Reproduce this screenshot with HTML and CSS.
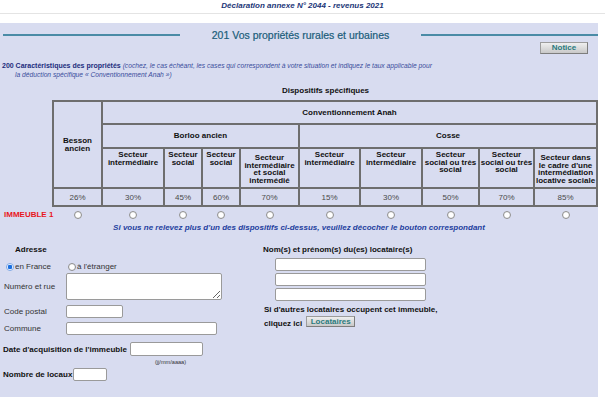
FILE: index.html
```html
<!DOCTYPE html>
<html lang="fr">
<head>
    <meta charset="UTF-8">
    <title>Déclaration annexe N° 2044 - revenus 2021</title>
    <link rel="stylesheet" href="styles.css">
</head>
<body>
    <div class="top">Déclaration annexe N° 2044 - revenus 2021</div>

    <div class="panel">
        <!-- Titre de la rubrique -->
        <div class="section-title">
            <span class="rule"></span>
            <h1>201 Vos propriétés rurales et urbaines</h1>
            <span class="rule"></span>
        </div>

        <div class="notice-row">
            <button class="btn">Notice</button>
        </div>

        <p class="intro"><b>200 Caractéristiques des propriétés</b> <i>(cochez, le cas échéant, les cases qui correspondent à votre situation et indiquez le taux applicable pour<br>la déduction spécifique « Conventionnement Anah »)</i></p>

        <div class="disp">Dispositifs spécifiques</div>

        <!-- Tableau des dispositifs -->
        <table class="grid">
            <colgroup>
                <col class="w51"><col class="w49"><col class="w62"><col class="w38"><col class="w38"><col class="w59">
                <col class="w61"><col class="w62"><col class="w57"><col class="w55"><col class="w63">
            </colgroup>
            <tr class="r1">
                <td class="blank" rowspan="4"></td>
                <th rowspan="3">Besson<br>ancien</th>
                <th colspan="9">Conventionnement Anah</th>
            </tr>
            <tr class="r2">
                <th colspan="4">Borloo ancien</th>
                <th colspan="5">Cosse</th>
            </tr>
            <tr class="r3">
                <th>Secteur<br>intermédiaire</th>
                <th>Secteur<br>social</th>
                <th>Secteur<br>social</th>
                <th class="four">Secteur<br>intermédiaire<br>et social<br>intermédié</th>
                <th>Secteur<br>intermédiaire</th>
                <th>Secteur<br>intermédiaire</th>
                <th>Secteur<br>social ou très<br>social</th>
                <th>Secteur<br>social ou très<br>social</th>
                <th class="four">Secteur dans<br>le cadre d'une<br>intermédiation<br>locative sociale</th>
            </tr>
            <tr class="r4">
                <td>26%</td><td>30%</td><td>45%</td><td>60%</td><td>70%</td>
                <td>15%</td><td>30%</td><td>50%</td><td>70%</td><td>85%</td>
            </tr>
            <tr class="radios">
                <td class="imm">IMMEUBLE 1</td>
                <td><input type="radio" name="d1"></td>
                <td><input type="radio" name="d2"></td>
                <td><input type="radio" name="d3"></td>
                <td><input type="radio" name="d4"></td>
                <td><input type="radio" name="d5"></td>
                <td><input type="radio" name="d6"></td>
                <td><input type="radio" name="d7"></td>
                <td><input type="radio" name="d8"></td>
                <td><input type="radio" name="d9"></td>
                <td><input type="radio" name="d10"></td>
            </tr>
        </table>

        <p class="note">Si vous ne relevez plus d'un des dispositifs ci-dessus, veuillez décocher le bouton correspondant</p>

        <!-- Adresse et locataires -->
        <div class="form">
            <div class="left">
                <div class="sub">Adresse</div>
                <div class="choice">
                    <label class="fr"><input type="radio" name="pays" checked>en France</label>
                    <label><input type="radio" name="pays">à l'étranger</label>
                </div>
                <div class="field street">
                    <span class="lbl">Numéro et rue</span>
                    <textarea></textarea>
                </div>
                <div class="field cp-row">
                    <span class="lbl">Code postal</span>
                    <input type="text" class="cp">
                </div>
                <div class="field town">
                    <span class="lbl">Commune</span>
                    <input type="text" class="commune">
                </div>
                <div class="line date">
                    <b>Date d'acquisition de l'immeuble</b>
                    <input type="text" class="dt">
                </div>
                <div class="hint">(jj/mm/aaaa)</div>
                <div class="line count">
                    <b>Nombre de locaux</b>
                    <input type="text" class="nb">
                </div>
            </div>

            <div class="right">
                <div class="sub">Nom(s) et prénom(s) du(es) locataire(s)</div>
                <div class="names">
                    <input type="text">
                    <input type="text">
                    <input type="text">
                </div>
                <div class="others">Si d'autres locataires occupent cet immeuble,</div>
                <div class="others click"><span>cliquez ici</span><button class="btn small">Locataires</button></div>
            </div>
        </div>
    </div>
</body>
</html>
```

FILE: styles.css
```css
/* Général */
body { margin: 0; font-family: "Liberation Sans", Arial, sans-serif; font-size: 8px; color: #222; background: #fff; }
.top { text-align: center; font-size: 8px; font-weight: bold; font-style: italic; color: #1b3677; padding-top: 1px; line-height: 9px; height: 12px; border-bottom: 1px solid #e4e4e4; margin-bottom: 9px; }
.panel { background: #d8dcf0; margin-right: 7px; height: 374px; overflow: hidden; }

/* Titre */
.section-title { display: flex; align-items: center; padding: 6px 0 0 3px; }
.section-title .rule { flex: 1; height: 2px; background: #4a8ba6; }
.section-title h1 { margin: 0 32px; font-size: 10.5px; font-weight: normal; color: #1a5d7a; line-height: 12px; -webkit-text-stroke: 0.2px #1a5d7a; }

/* Boutons */
.notice-row { display: flex; justify-content: flex-end; padding: 1px 10px 0 0; }
.btn { font-family: "Liberation Sans", Arial, sans-serif; font-size: 8px; font-weight: bold; color: #2a7a7e; height: 12px; width: 48px; padding: 0; line-height: 10px; border: 1px solid #9c9c9c; border-right-color: #7d7d7d; border-bottom-color: #7d7d7d; border-radius: 0; background: linear-gradient(#efefef, #c8c8c8); }
.btn.small { width: 49px; height: 11px; line-height: 9px; }

/* Introduction */
.intro { margin: 7px 0 0 2px; padding-left: 13px; text-indent: -13px; line-height: 9px; font-size: 7px; color: #1c2d7d; }
.intro i { font-size: 6.7px; font-weight: normal; color: #3a4d9c; }
.disp { text-align: center; font-weight: bold; color: #111; margin: 7px 0 0 53px; line-height: 10px; }

/* Tableau */
.grid { border-collapse: collapse; table-layout: fixed; width: 595px; margin: 4px 0 0 2px; }
.w51 { width: 51px; } .w49 { width: 49px; } .w62 { width: 62px; } .w38 { width: 38px; } .w59 { width: 59px; }
.w61 { width: 61px; } .w57 { width: 57px; } .w55 { width: 55px; } .w63 { width: 63px; }
.grid th, .grid td { border: 2px solid #6e6e6e; padding: 0; text-align: center; line-height: 7.5px; white-space: nowrap; }
.grid th { color: #111; }
.grid .blank { border: none; border-right: 2px solid #6e6e6e; }
.grid .r1 { height: 23px; }
.grid .r2 { height: 24px; }
.grid .r3 { height: 40px; }
.grid .r3 th { vertical-align: top; padding-top: 2px; }
.grid .r3 th.four { padding-top: 5px; }
.grid .r4 { height: 18px; }
.grid .r4 td { color: #4a4a4a; line-height: 9px; }
.grid .radios td { border: none; height: 15px; padding: 0; line-height: 9px; }
.grid .radios .imm { text-align: left; color: #e8161e; font-weight: bold; padding-left: 2px; }

input[type="radio"] { appearance: none; -webkit-appearance: none; width: 8px; height: 8px; margin: 0; border: 1px solid #8f8f8f; border-radius: 50%; background: radial-gradient(circle, #fff 0 2px, #f2f2f2 3px); vertical-align: middle; }
input[type="radio"]:checked { border-color: #7fa9e6; background: radial-gradient(circle, #1a6fe0 0 2px, #fff 2.6px); }

.note { margin: 1px 0 0; text-align: center; line-height: 10px; font-weight: bold; font-style: italic; color: #1f3f9f; }

/* Formulaire */
.form { display: grid; grid-template-columns: 263px 1fr; margin-top: 12px; }
.sub { font-weight: bold; color: #111; line-height: 10px; }
.left .sub { padding-left: 15px; }
.choice { display: flex; margin: 7px 0 0 6px; color: #333; line-height: 10px; }
.choice label { display: flex; align-items: center; gap: 1px; }
.choice .fr { width: 62px; }
.field { display: flex; align-items: center; margin: 5px 0 0 4px; color: #333; }
.field .lbl { width: 62px; }
.field.street { margin-top: 1px; }
.field.town { margin-top: 4px; }
textarea, input[type="text"] { box-sizing: border-box; border: 1px solid #9a9a9a; border-radius: 2px; background: #fff; margin: 0; padding: 0; }
textarea { width: 156px; height: 27px; resize: both; }
.cp { width: 57px; height: 13px; }
.commune { width: 151px; height: 13px; }
.line { display: flex; align-items: center; margin: 7px 0 0 3px; color: #111; }
.date b { margin-right: 3px; }
.dt { width: 73px; height: 14px; }
.hint { margin: 3px 0 0 155px; font-size: 5.6px; line-height: 6px; color: #333; }
.line.count { margin-top: 3px; }
.count b { margin-right: 1px; }
.nb { width: 34px; height: 13px; }

.names { display: flex; flex-direction: column; gap: 2px; margin: 3px 0 0 12px; }
.names input { width: 151px; height: 13px; }
.others { font-weight: bold; color: #111; margin: 4px 0 0 1px; line-height: 10px; }
.others.click { display: flex; align-items: flex-start; margin-top: 1px; }
.others.click span { margin: 3px 4px 0 0; }
```
